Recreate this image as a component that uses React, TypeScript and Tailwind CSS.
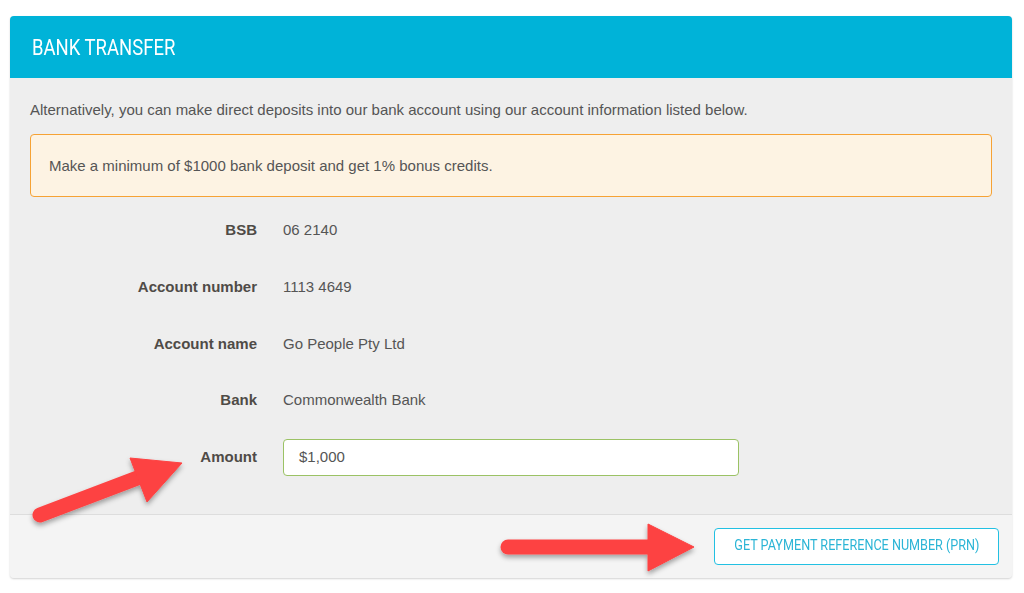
import React from "react";

const rows: { label: string; value: string }[] = [
  { label: "BSB", value: "06 2140" },
  { label: "Account number", value: "1113 4649" },
  { label: "Account name", value: "Go People Pty Ltd" },
  { label: "Bank", value: "Commonwealth Bank" },
];

export default function App() {
  return (
    <div className="relative w-[1024px] h-[593px] bg-white overflow-hidden [font-family:'Liberation_Sans',Arial,sans-serif]">
      <div className="ml-[10px] mt-[16px] w-[1002px] rounded-[4px] bg-[#eeeeee] shadow-[0_1px_2px_rgba(0,0,0,0.18)]">
        <div className="h-[62px] rounded-t-[4px] bg-[#00b3d8] px-[22px] flex items-center">
          <h1 className="inline-block origin-left scale-x-[0.84] whitespace-nowrap text-white text-[22px] [font-family:Roboto,sans-serif] font-normal">
            BANK TRANSFER
          </h1>
        </div>
        <div className="px-[20px] pt-[22px] pb-[28px]">
          <p className="text-[15px] leading-[20px] text-[#555]">
            Alternatively, you can make direct deposits into our bank account using our account information listed below.
          </p>
          <div className="mt-[14px] h-[63px] rounded-[4px] border-[1.5px] border-[#f6a234] bg-[#fdf3e3] px-[18px] pt-[1px] flex items-center">
            <span className="text-[15px] text-[#555]">
              Make a minimum of $1000 bank deposit and get 1% bonus credits.
            </span>
          </div>
          <div className="mt-[5px] flex flex-col">
            {rows.map((r) => (
              <div key={r.label} className="h-[56.75px] flex items-center">
                <div className="w-[227px] text-right text-[15px] font-bold text-[#4f4b47]">{r.label}</div>
                <div className="ml-[26px] text-[15px] text-[#555]">{r.value}</div>
              </div>
            ))}
            <div className="h-[56.75px] flex items-center">
              <div className="w-[227px] text-right text-[15px] font-bold text-[#4f4b47]">Amount</div>
              <div className="ml-[26px] w-[456px] h-[37px] rounded-[4px] border-[1.5px] border-[#9bc265] bg-white px-[15px] flex items-center text-[15px] text-[#555]">
                $1,000
              </div>
            </div>
          </div>
        </div>
        <div className="h-[64px] border-t border-[#dddddd] bg-[#f4f4f4] rounded-b-[4px] flex items-center justify-end pr-[13px]">
          <button className="h-[37px] w-[285px] rounded-[4px] border-[1.5px] border-[#22c0e2] bg-white flex items-center justify-center overflow-hidden">
            <span className="inline-block scale-x-[0.87] whitespace-nowrap text-[#2bb5d6] text-[14.5px] [font-family:Roboto,sans-serif]">
              GET PAYMENT REFERENCE NUMBER (PRN)
            </span>
          </button>
        </div>
      </div>

      <svg className="absolute left-0 top-0 pointer-events-none" width="1024" height="593" viewBox="0 0 1024 593">
        <defs>
          <filter id="sh" x="-20%" y="-20%" width="140%" height="160%">
            <feDropShadow dx="0" dy="3" stdDeviation="2.5" floodColor="#000" floodOpacity="0.35" />
          </filter>
        </defs>
        <g filter="url(#sh)" fill="#fd4242" stroke="#fd4242">
          <line x1="40" y1="515" x2="140" y2="477" strokeWidth="15" strokeLinecap="round" />
          <polygon points="182,463 130,458 147,502" strokeWidth="1" strokeLinejoin="round" />
        </g>
        <g filter="url(#sh)" fill="#fd4242" stroke="#fd4242">
          <line x1="508" y1="547" x2="652" y2="547" strokeWidth="15" strokeLinecap="round" />
          <polygon points="648,524 694,547 648,571" strokeWidth="1" strokeLinejoin="round" />
        </g>
      </svg>
    </div>
  );
}
